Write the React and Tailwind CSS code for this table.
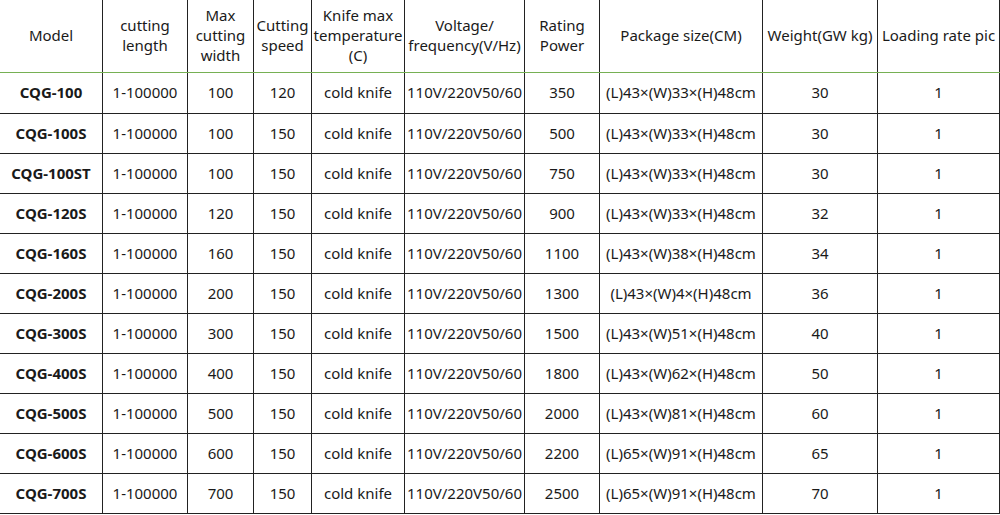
import React from "react";

const rows = [
  ["CQG-100", "1-100000", "100", "120", "cold knife", "110V/220V50/60", "350", "(L)43×(W)33×(H)48cm", "30", "1"],
  ["CQG-100S", "1-100000", "100", "150", "cold knife", "110V/220V50/60", "500", "(L)43×(W)33×(H)48cm", "30", "1"],
  ["CQG-100ST", "1-100000", "100", "150", "cold knife", "110V/220V50/60", "750", "(L)43×(W)33×(H)48cm", "30", "1"],
  ["CQG-120S", "1-100000", "120", "150", "cold knife", "110V/220V50/60", "900", "(L)43×(W)33×(H)48cm", "32", "1"],
  ["CQG-160S", "1-100000", "160", "150", "cold knife", "110V/220V50/60", "1100", "(L)43×(W)38×(H)48cm", "34", "1"],
  ["CQG-200S", "1-100000", "200", "150", "cold knife", "110V/220V50/60", "1300", "(L)43×(W)4×(H)48cm", "36", "1"],
  ["CQG-300S", "1-100000", "300", "150", "cold knife", "110V/220V50/60", "1500", "(L)43×(W)51×(H)48cm", "40", "1"],
  ["CQG-400S", "1-100000", "400", "150", "cold knife", "110V/220V50/60", "1800", "(L)43×(W)62×(H)48cm", "50", "1"],
  ["CQG-500S", "1-100000", "500", "150", "cold knife", "110V/220V50/60", "2000", "(L)43×(W)81×(H)48cm", "60", "1"],
  ["CQG-600S", "1-100000", "600", "150", "cold knife", "110V/220V50/60", "2200", "(L)65×(W)91×(H)48cm", "65", "1"],
  ["CQG-700S", "1-100000", "700", "150", "cold knife", "110V/220V50/60", "2500", "(L)65×(W)91×(H)48cm", "70", "1"],
];

const headers = [
  ["Model"],
  ["cutting", "length"],
  ["Max", "cutting", "width"],
  ["Cutting", "speed"],
  ["Knife max", "temperature", "(C)"],
  ["Voltage/", "frequency(V/Hz)"],
  ["Rating", "Power"],
  ["Package size(CM)"],
  ["Weight(GW kg)"],
  ["Loading rate pic"],
];

const grid =
  "grid grid-cols-[103px_85px_66px_58px_93px_120px_75px_163px_115px_122px]";

export default function App() {
  return (
    <div
      className="w-[1000px] h-[515px] bg-white text-[#1a1a1a] text-[15px] leading-[20px] overflow-hidden"
      style={{ fontFamily: '"Noto Sans", "Open Sans", Arial, sans-serif' }}
    >
      <div className={`${grid} h-[73px] border-b border-[#76b054]`}>
        {headers.map((lines, i) => (
          <div
            key={i}
            className="flex flex-col items-center justify-center pb-[2px] text-center whitespace-nowrap border-r border-[#222]"
          >
            {lines.map((l, j) => (
              <span key={j}>{l}</span>
            ))}
          </div>
        ))}
      </div>
      {rows.map((r, ri) => (
        <div
          key={ri}
          className={`${grid} ${ri === 0 ? "h-[41px]" : "h-[40px]"} border-b border-[#222]`}
        >
          {r.map((c, ci) => (
            <div
              key={ci}
              className={`flex items-center justify-center pb-[2px] whitespace-nowrap border-r border-[#222] ${
                ci === 0 ? "font-bold" : ""
              }`}
            >
              {c}
            </div>
          ))}
        </div>
      ))}
    </div>
  );
}
